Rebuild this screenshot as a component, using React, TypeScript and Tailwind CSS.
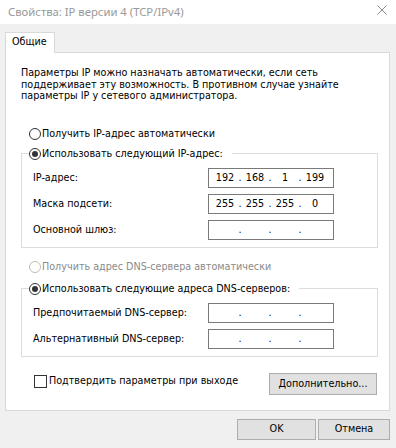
const body = '"DejaVu Sans Condensed", "DejaVu Sans", sans-serif';

function Radio({ checked, disabled, label }: { checked?: boolean; disabled?: boolean; label: string }) {
  return (
    <div className="flex items-center h-[16px] gap-[1px]">
      <span
        className={`w-[12px] h-[12px] rounded-full border bg-white flex items-center justify-center ${
          disabled ? "border-[#bcbcbc]" : "border-[#333333]"
        }`}
      >
        {checked && <span className="w-[6px] h-[6px] rounded-full bg-[#333333]" />}
      </span>
      <span className={`whitespace-nowrap ${disabled ? "text-[#8a8a8a]" : "text-black"}`}>{label}</span>
    </div>
  );
}

function IpField({ parts }: { parts?: string[] }) {
  const p = parts ?? ["", "", "", ""];
  return (
    <div className="w-[126px] h-[20px] border border-[#7a7a7a] bg-white flex items-center pl-[3px] leading-[12px]">
      {p.map((v, i) => (
        <div key={i} className="flex items-center">
          {i > 0 && <span className="w-[4px] text-center text-[#000040]">.</span>}
          <span className="w-[26px] text-center">{v}</span>
        </div>
      ))}
    </div>
  );
}

function Row({ label, parts }: { label: string; parts?: string[] }) {
  return (
    <div className="flex items-center justify-between h-[20px] pl-[11px] pr-[43px]">
      <span className="whitespace-nowrap">{label}</span>
      <IpField parts={parts} />
    </div>
  );
}

function Button({ children, w }: { children: string; w: string }) {
  return (
    <div className={`${w} h-[21px] bg-[#e1e1e1] border border-[#adadad] flex items-center justify-center`}>
      {children}
    </div>
  );
}

export default function App() {
  return (
    <div
      className="w-[396px] h-[448px] bg-[#f0f0f0] overflow-hidden text-black text-[10.7px] leading-[12px]"
      style={{ fontFamily: body }}
    >
      {/* title bar */}
      <div className="h-[24px] bg-white flex items-center justify-between pl-[8px] pr-[9px]">
        <span className="text-[#999999] text-[11.3px] leading-[14px] whitespace-nowrap" style={{ fontFamily: '"Noto Sans", sans-serif' }}>
          Свойства: IP версии 4 (TCP/IPv4)
        </span>
        <svg width="10" height="10" viewBox="0 0 10 10" className="mb-[5px]">
          <path d="M0.5 0.5 L9.5 9.5 M9.5 0.5 L0.5 9.5" stroke="#8c8c8c" strokeWidth="1" fill="none" />
        </svg>
      </div>

      <div className="pl-[5px] pt-[8px]">
        {/* tab */}
        <div className="relative z-10 w-[50px] h-[21px] -mb-[1px] bg-white border border-b-0 border-[#d9d9d9] pl-[6px] pt-[3px]">
          Общие
        </div>

        {/* panel */}
        <div className="w-[385px] bg-white border border-[#d9d9d9] pb-[15px]">
          <p className="pt-[14px] pl-[15px] leading-[11.6px] whitespace-nowrap">
            Параметры IP можно назначать автоматически, если сеть
            <br />
            поддерживает эту возможность. В противном случае узнайте
            <br />
            параметры IP у сетевого администратора.
          </p>

          <div className="mt-[24px] ml-[23px]">
            <Radio label="Получить IP-адрес автоматически" />
          </div>

          <fieldset className="mt-[4px] ml-[15px] mr-[11px] border border-[#dcdcdc] pt-[6px] pb-[7px] flex flex-col gap-[6px]">
            <legend className="ml-[7px] pr-[9px]">
              <Radio checked label="Использовать следующий IP-адрес:" />
            </legend>
            <Row label="IP-адрес:" parts={["192", "168", "1", "199"]} />
            <Row label="Маска подсети:" parts={["255", "255", "255", "0"]} />
            <Row label="Основной шлюз:" />
          </fieldset>

          <div className="mt-[11px] ml-[23px]">
            <Radio disabled label="Получить адрес DNS-сервера автоматически" />
          </div>

          <fieldset className="mt-[6px] ml-[15px] mr-[11px] border border-[#dcdcdc] pt-[6px] pb-[7px] flex flex-col gap-[6px]">
            <legend className="ml-[7px] pr-[9px]">
              <Radio checked label="Использовать следующие адреса DNS-серверов:" />
            </legend>
            <Row label="Предпочитаемый DNS-сервер:" />
            <Row label="Альтернативный DNS-сервер:" />
          </fieldset>

          <div className="mt-[16px] flex items-start justify-between pl-[28px] pr-[12px]">
            <div className="flex items-center gap-[2px] h-[17px]">
              <span className="w-[13px] h-[13px] border border-[#333333] bg-white" />
              <span className="whitespace-nowrap">Подтвердить параметры при выходе</span>
            </div>
            <div className="w-[108px] h-[22px] bg-[#e1e1e1] border border-[#adadad] flex items-center justify-center">
              Дополнительно...
            </div>
          </div>
        </div>

        {/* bottom buttons */}
        <div className="mt-[8px] flex justify-end gap-[2px] pr-[6px]">
          <Button w="w-[79px]">OK</Button>
          <Button w="w-[72px]">Отмена</Button>
        </div>
      </div>
    </div>
  );
}
